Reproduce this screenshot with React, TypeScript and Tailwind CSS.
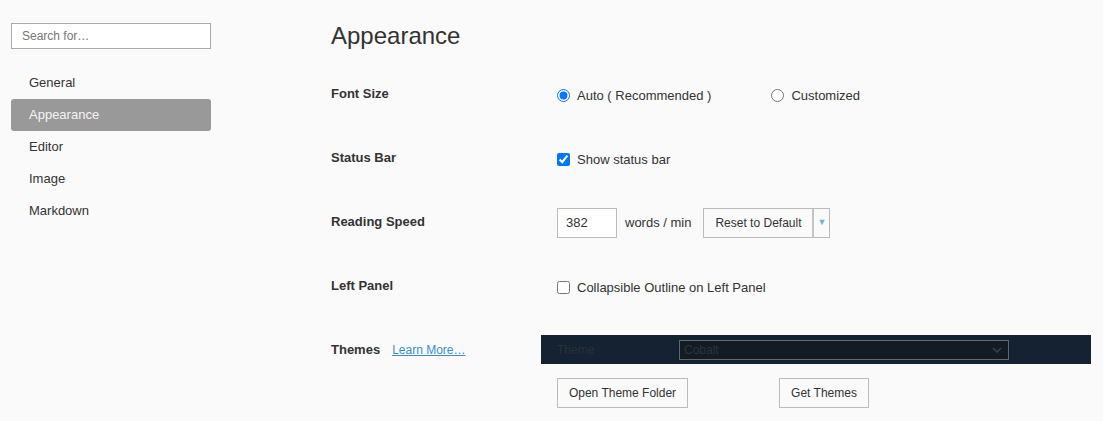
import React from "react";

const navItems = ["General", "Appearance", "Editor", "Image", "Markdown"];

const Row = ({
  label,
  children,
  shift = true,
}: {
  label: React.ReactNode;
  children: React.ReactNode;
  shift?: boolean;
}) => (
  <div className="flex h-[64px] items-center">
    <div className="w-[226px] shrink-0 -mt-[1px] text-[13px] font-bold text-[#333]">{label}</div>
    <div className={`flex items-center text-[13px] text-[#333] ${shift ? "mt-[3px]" : "mt-[1px]"}`}>
      {children}
    </div>
  </div>
);

export default function App() {
  return (
    <div
      className="flex h-[421px] w-full overflow-hidden bg-[#fafafa] text-[#333]"
      style={{ fontFamily: '"Liberation Sans", Arial, sans-serif' }}
    >
      {/* Sidebar */}
      <aside className="w-[320px] shrink-0 pl-[11px] pt-[23px]">
        <input
          type="text"
          placeholder="Search for…"
          className="h-[26px] w-[200px] border border-[#aaa] bg-white px-[10px] text-[12px] text-[#333] placeholder:text-[#777] outline-none"
        />
        <nav className="mt-[18px] w-[200px]">
          {navItems.map((item) => (
            <div
              key={item}
              className={`flex h-[32px] items-center rounded-[3px] pl-[18px] text-[13px] ${
                item === "Appearance" ? "bg-[#999] text-[#f5f5f5]" : "text-[#333]"
              }`}
            >
              {item}
            </div>
          ))}
        </nav>
      </aside>

      {/* Main */}
      <main className="flex-1 pl-[11px] pr-[12px] pt-[20px]">
        <h1 className="h-[32px] text-[24px] leading-[32px] font-normal text-[#333]">Appearance</h1>

        <div className="mt-[10px]">
          <Row label="Font Size">
            <label className="flex items-center">
              <input type="radio" name="fs" defaultChecked className="m-0 h-[13px] w-[13px]" />
              <span className="ml-[7px]">Auto ( Recommended )</span>
            </label>
            <label className="ml-[60px] flex items-center">
              <input type="radio" name="fs" className="m-0 h-[13px] w-[13px]" />
              <span className="ml-[7px]">Customized</span>
            </label>
          </Row>

          <Row label="Status Bar">
            <label className="flex items-center">
              <input type="checkbox" defaultChecked className="m-0 h-[13px] w-[13px]" />
              <span className="ml-[7px]">Show status bar</span>
            </label>
          </Row>

          <Row label="Reading Speed" shift={false}>
            <input
              type="text"
              defaultValue="382"
              className="h-[30px] w-[60px] border border-[#bbb] bg-white px-[8px] text-[13px] text-[#333] outline-none"
            />
            <span className="ml-[8px]">words / min</span>
            <div className="ml-[12px] flex h-[30px] border border-[#bbb] bg-[#fafafa]">
              <button className="w-[108px] text-[12px] text-[#333]">Reset to Default</button>
              <span className="flex w-[17px] items-center justify-center border-l-2 border-[#c4c4c4] text-[9px] text-[#6fb3d2]">
                ▼
              </span>
            </div>
          </Row>

          <Row label="Left Panel">
            <label className="flex items-center">
              <input type="checkbox" className="m-0 h-[13px] w-[13px]" />
              <span className="ml-[7px]">Collapsible Outline on Left Panel</span>
            </label>
          </Row>

          {/* Themes */}
          <div className="flex pt-[17px]">
            <div className="flex h-[29px] w-[210px] shrink-0 items-center text-[13px]">
              <span className="font-bold">Themes</span>
              <a href="#" className="ml-[12px] text-[12px] text-[#3b8fcf] underline">
                Learn More…
              </a>
            </div>
            <div className="flex-1">
              <div className="flex h-[29px] items-center bg-[#152231] pl-[16px]">
                <span className="w-[122px] text-[12px] text-[#2a3038]">Theme</span>
                <div className="flex h-[20px] w-[330px] items-center justify-between border border-[#666] bg-[#131b24] pl-[4px] pr-[6px] text-[12px] text-[#2e343b]">
                  <span>Cobalt</span>
                  <svg width="10" height="6" viewBox="0 0 10 6">
                    <path d="M1 1l4 4 4-4" fill="none" stroke="#3a4048" strokeWidth="1.5" />
                  </svg>
                </div>
              </div>
              <div className="mt-[14px] flex pl-[16px]">
                <button className="h-[30px] w-[131px] border border-[#bbb] bg-[#fafafa] text-[12px] text-[#333]">
                  Open Theme Folder
                </button>
                <button className="ml-[91px] h-[30px] w-[90px] border border-[#bbb] bg-[#fafafa] text-[12px] text-[#333]">
                  Get Themes
                </button>
              </div>
            </div>
          </div>
        </div>
      </main>
    </div>
  );
}
